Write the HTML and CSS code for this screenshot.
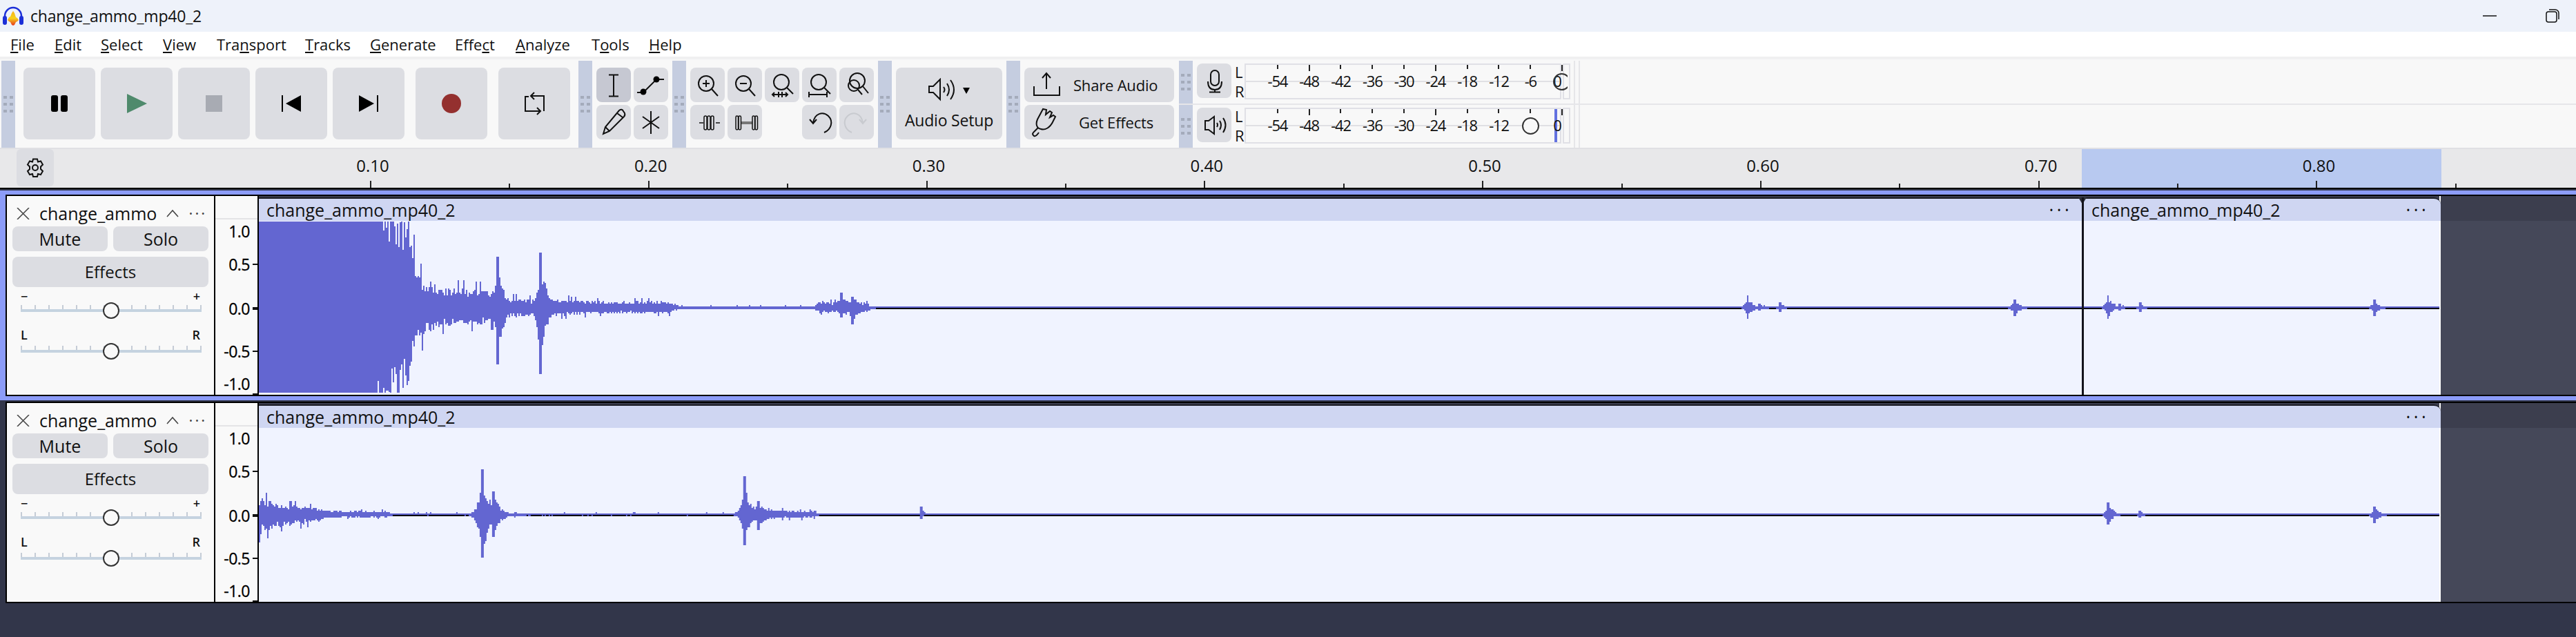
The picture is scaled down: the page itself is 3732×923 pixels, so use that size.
FILE: index.html
```html
<!DOCTYPE html>
<html lang="en">
<head>
<meta charset="utf-8">
<title>change_ammo_mp40_2</title>
<link rel="stylesheet" href="styles.css">
</head>
<body>
<header class="titlebar">
  <svg class="logo" viewBox="0 0 32 28" width="32" height="28"><defs><linearGradient id="lg" x1="0" y1="0" x2="0" y2="1"><stop offset="0" stop-color="#f7b21a"/><stop offset=".5" stop-color="#f6d21c"/><stop offset="1" stop-color="#e8331c"/></linearGradient></defs><path d="M4 20V14a12 12 0 0 1 24 0v6" fill="none" stroke="#1c2fd8" stroke-width="2.5"/><rect x="1" y="14" width="6" height="13" rx="3" fill="#1c2fd8"/><rect x="25" y="14" width="6" height="13" rx="3" fill="#1c2fd8"/><path d="M8 20l2-4 2-1 2-5 2-3 2 3 2 6 2 1 2 3-2 2-2 1-2 4-2 1-2-1-2-4-2-1z" fill="url(#lg)"/></svg>
  <span class="title-text">change_ammo_mp40_2</span>
  <span class="win-spacer"></span>
  <svg class="win-icon" viewBox="0 0 20 20" width="20" height="20"><path d="M0 10h20" stroke="#111" stroke-width="1.5"/></svg>
  <svg class="win-icon" viewBox="0 0 20 20" width="20" height="20"><rect x="1" y="4" width="15" height="15" rx="3" fill="none" stroke="#111" stroke-width="1.5"/><path d="M5 1h9a5 5 0 0 1 5 5v9" fill="none" stroke="#111" stroke-width="1.5"/></svg>
</header>

<nav class="menubar">
  <span class="m-file"><u>F</u>ile</span><span class="m-edit"><u>E</u>dit</span><span class="m-sel"><u>S</u>elect</span><span class="m-view"><u>V</u>iew</span><span class="m-trans">Tra<u>n</u>sport</span><span class="m-tracks"><u>T</u>racks</span><span class="m-gen"><u>G</u>enerate</span><span class="m-eff">Effe<u>c</u>t</span><span class="m-ana"><u>A</u>nalyze</span><span class="m-tools">T<u>o</u>ols</span><span class="m-help"><u>H</u>elp</span>
</nav>

<section class="toolbar">
  <div class="grip"></div>
  <div class="transport">
    <button class="btn big"><svg viewBox="0 0 104 104"><rect x="40" y="40" width="10" height="24" rx="3"/><rect x="54" y="40" width="10" height="24" rx="3"/></svg></button>
    <button class="btn big"><svg viewBox="0 0 104 104"><path class="play" d="M38 38l29 14-29 14z"/></svg></button>
    <button class="btn big"><svg viewBox="0 0 104 104"><rect class="stop" x="40" y="40" width="24" height="24"/></svg></button>
    <button class="btn big"><svg viewBox="0 0 104 104"><path d="M66 40v24L44 52z"/><rect x="38" y="40" width="2" height="24"/></svg></button>
    <button class="btn big"><svg viewBox="0 0 104 104"><path d="M38 40v24l22-12z"/><rect x="64" y="40" width="2" height="24"/></svg></button>
    <button class="btn big rec"><svg viewBox="0 0 104 104"><circle class="record" cx="52" cy="52" r="14"/></svg></button>
    <button class="btn big"><svg viewBox="0 0 104 104"><path class="ln" d="M47 41h19v22M39 46v17h22M39 46v-4h5M52 36l-5 5 5 5M56 58l5 5-5 5"/></svg></button>
  </div>
  <div class="grip"></div>
  <div class="tools">
    <button class="btn sm active"><svg viewBox="0 0 50 50"><path class="ln" d="M25 11v30M18 10.500h14M18 41.500h14"/></svg></button>
    <button class="btn sm"><svg viewBox="0 0 50 50"><path class="ln" d="M5 36h9l19-19h11"/><circle cx="14" cy="35" r="4.500"/><circle cx="33" cy="17" r="4.500"/></svg></button>
    <button class="btn sm"><svg viewBox="0 0 50 50"><path class="ln" d="M10 42l3-10 20-24q4-3 6 1l2 3q1 3-1 5L19 38zM13 32l6 6M30 12l8 6"/></svg></button>
    <button class="btn sm"><svg viewBox="0 0 50 50"><path class="ln" d="M25 9v33M13 17l24 17M13 34l24-17"/></svg></button>
  </div>
  <div class="grip"></div>
  <div class="zooms">
    <button class="btn sm"><svg viewBox="0 0 50 50"><circle class="ln" cx="23" cy="23" r="11"/><path class="ln" d="M31 31l9 10M23 18v10M18 23h10"/></svg></button>
    <button class="btn sm"><svg viewBox="0 0 50 50"><circle class="ln" cx="23" cy="23" r="11"/><path class="ln" d="M31 31l9 10M18 23h10"/></svg></button>
    <button class="btn sm"><svg viewBox="0 0 50 50"><circle class="ln" cx="24" cy="21" r="11"/><path class="ln" d="M32 29l9 9M11 39h22M20 35v8M25 35v8M14 36l-3 3 3 3M30 36l3 3-3 3"/></svg></button>
    <button class="btn sm"><svg viewBox="0 0 50 50"><circle class="ln" cx="24" cy="21" r="11"/><path class="ln" d="M32 29l9 9M11 39h24M10 35v8M36 35v8"/></svg></button>
    <button class="btn sm"><svg viewBox="0 0 50 50"><circle class="ln" cx="26" cy="19" r="11"/><circle class="ln" cx="21" cy="26" r="8"/><path class="ln" d="M34 27l8 10M27 32l6 7"/></svg></button>
    <button class="btn sm"><svg viewBox="0 0 50 50"><path class="ln thin" d="M13 26h6M37 26h6"/><rect class="ln thin" x="20" y="16" width="4" height="20" rx="2"/><rect class="ln thin" x="25" y="16" width="4" height="20" rx="2"/><rect class="ln thin" x="30" y="16" width="4" height="20" rx="2"/></svg></button>
    <button class="btn sm"><svg viewBox="0 0 50 50"><path class="ln gray-bar" d="M20 26h16"/><rect class="ln thin" x="12" y="16" width="3.500" height="20" rx="1.700"/><rect class="ln thin" x="16" y="16" width="3.500" height="20" rx="1.700"/><rect class="ln thin" x="36" y="16" width="3.500" height="20" rx="1.700"/><rect class="ln thin" x="40" y="16" width="3.500" height="20" rx="1.700"/></svg></button>
    <span class="blank"></span>
    <button class="btn sm"><svg viewBox="0 0 50 50"><path class="ln" d="M32 40c10-4 14-16 6-24-8-7-20-4-22 10M11 21l5 6 5-6"/></svg></button>
    <button class="btn sm"><svg viewBox="0 0 50 50"><path class="ln faint" d="M18 40C8 36 4 24 12 16c8-7 20-4 22 10M39 21l-5 6-5-6"/></svg></button>
  </div>
  <div class="grip"></div>
  <div class="setup-wrap">
    <button class="btn setup">
      <svg class="setup-icon" viewBox="0 0 80 34" width="80" height="34"><path class="ln" d="M10 12h6L26 2v29L16 21h-6z"/><path class="ln" d="M31 13q3 4 0 8M36 8q6 9 0 18M41 3q10 14 0 28"/><path d="M59 14h10l-5 9z"/></svg>
      <span>Audio Setup</span>
    </button>
  </div>
  <div class="grip"></div>
  <div class="share">
    <button class="btn wide"><svg viewBox="0 0 62 50" width="62" height="50"><path class="ln" d="M14 27v13h37V27M32 31V9M26 15l6-7 6 7"/></svg><span class="wide-l1">Share Audio</span></button>
    <button class="btn wide"><svg viewBox="0 0 62 50" width="62" height="50"><path class="ln" d="M27 6l-8 15c-3 7-1 13 5 14 6 2 13-2 17-10l4-8-3-2-5 3 3-7-3-2-6 5 1-7zM20 33l-4 4c-3 3-6 5-2 8 3 1 5-2 7-5"/></svg><span class="wide-l2">Get Effects</span></button>
  </div>
  <div class="meters">
    <div class="meter-row">
      <div class="grip small"></div>
      <button class="btn sm meter-btn"><svg viewBox="0 0 50 50"><rect class="ln" x="20" y="10" width="12" height="22" rx="6"/><path class="ln" d="M16 26q0 12 10 12t10-12M26 38v3M18 41.500h16"/></svg></button>
      <div class="lr"><span>L</span><span>R</span></div>
      <div class="meter">
        <div class="cell"><i></i><b>-54</b></div><div class="cell"><i></i><b>-48</b></div><div class="cell"><i></i><b>-42</b></div><div class="cell"><i></i><b>-36</b></div><div class="cell"><i></i><b>-30</b></div><div class="cell"><i></i><b>-24</b></div><div class="cell"><i></i><b>-18</b></div><div class="cell"><i></i><b>-12</b></div><div class="cell"><i></i><b>-6</b></div><div class="cell"><i></i><b>0</b></div>
        <span class="thumb thumb-rec"></span>
      </div>
      <div class="meter-end"></div>
      <div class="meter-sep"></div>
    </div>
    <div class="meter-row">
      <div class="grip small"></div>
      <button class="btn sm meter-btn"><svg viewBox="0 0 50 50"><path class="ln" d="M12 19h5l8-6v25l-8-6h-5z"/><path class="ln" d="M29 22q2 3 0 6M33 19q4 6 0 13M38 15q7 10 0 21"/></svg></button>
      <div class="lr"><span>L</span><span>R</span></div>
      <div class="meter">
        <span class="level"></span>
        <div class="cell"><i></i><b>-54</b></div><div class="cell"><i></i><b>-48</b></div><div class="cell"><i></i><b>-42</b></div><div class="cell"><i></i><b>-36</b></div><div class="cell"><i></i><b>-30</b></div><div class="cell"><i></i><b>-24</b></div><div class="cell"><i></i><b>-18</b></div><div class="cell"><i></i><b>-12</b></div><div class="cell"><i></i><b>-6</b></div><div class="cell"><i></i><b>0</b></div>
        <span class="thumb thumb-play"></span>
      </div>
      <div class="meter-end"></div>
      <div class="meter-sep"></div>
    </div>
  </div>
</section>

<section class="ruler">
  <button class="gear"><svg viewBox="0 0 28 28" width="28" height="28"><path class="ln" d="M11 1.500h6l1 4 4-1 3 5-3 3v3.500l3 3-3 5-4-1-1 4h-6l-1-4-4 1-3-5 3-3V12.500l-3-3 3-5 4 1z"/><circle class="ln" cx="14" cy="14" r="4"/></svg></button>
  <div class="cells">
    <div class="rc major"><b>0.10</b><i></i></div><div class="rc"><b></b><i></i></div>
    <div class="rc major"><b>0.20</b><i></i></div><div class="rc"><b></b><i></i></div>
    <div class="rc major"><b>0.30</b><i></i></div><div class="rc"><b></b><i></i></div>
    <div class="rc major"><b>0.40</b><i></i></div><div class="rc"><b></b><i></i></div>
    <div class="rc major"><b>0.50</b><i></i></div><div class="rc"><b></b><i></i></div>
    <div class="rc major"><b>0.60</b><i></i></div><div class="rc"><b></b><i></i></div>
    <div class="rc major"><b>0.70</b><i></i></div><div class="rc"><b></b><i></i></div>
    <div class="rc major"><b>0.80</b><i></i></div><div class="rc"><b></b><i></i></div>
  </div>
</section>

<main class="tracks">
  <article class="track selected">
    <div class="track-inner">
      <aside class="panel">
        <div class="panel-title"><svg class="x" viewBox="0 0 19 17" width="19" height="17"><path class="ln gr" d="M1 0l17 17M18 0L1 17"/></svg><span class="name">change_ammo</span><svg class="caret" viewBox="0 0 20 12" width="20" height="12"><path class="ln gr" d="M2 11l8-9 8 9"/></svg><span class="more">•••</span></div>
        <div class="ms"><button class="btn pbtn">Mute</button><button class="btn pbtn">Solo</button></div>
        <button class="btn effects">Effects</button>
        <div class="slabels gain"><span>−</span><span>+</span></div>
        <div class="slider"><span class="sthumb"></span></div>
        <div class="slabels pan"><span>L</span><span>R</span></div>
        <div class="slider"><span class="sthumb"></span></div>
      </aside>
      <div class="vruler">
        <div class="vr-head"></div>
        <div class="vr-scale">
          <div class="vr-row"><b>1.0</b></div>
          <div class="vr-row tk"><b>0.5</b></div>
          <div class="vr-row tk thick"><b>0.0</b></div>
          <div class="vr-row tk"><b>-0.5</b></div>
          <div class="vr-row"><b>-1.0</b></div>
        </div>
      </div>
      <div class="lane">
        <div class="clip clip-a">
          <div class="clip-title"><span>change_ammo_mp40_2</span><span class="cdots">•••</span></div>
          <canvas class="wave" data-wave="a" data-x="375" width="2641" height="252"></canvas>
        </div>
        <div class="clip clip-b">
          <div class="clip-title"><span>change_ammo_mp40_2</span><span class="cdots">•••</span></div>
          <canvas class="wave" data-wave="b" data-x="3019" width="516" height="252"></canvas>
        </div>
      </div>
    </div>
  </article>
  <article class="track">
    <div class="track-inner">
      <aside class="panel">
        <div class="panel-title"><svg class="x" viewBox="0 0 19 17" width="19" height="17"><path class="ln gr" d="M1 0l17 17M18 0L1 17"/></svg><span class="name">change_ammo</span><svg class="caret" viewBox="0 0 20 12" width="20" height="12"><path class="ln gr" d="M2 11l8-9 8 9"/></svg><span class="more">•••</span></div>
        <div class="ms"><button class="btn pbtn">Mute</button><button class="btn pbtn">Solo</button></div>
        <button class="btn effects">Effects</button>
        <div class="slabels gain"><span>−</span><span>+</span></div>
        <div class="slider"><span class="sthumb"></span></div>
        <div class="slabels pan"><span>L</span><span>R</span></div>
        <div class="slider"><span class="sthumb"></span></div>
      </aside>
      <div class="vruler">
        <div class="vr-head"></div>
        <div class="vr-scale">
          <div class="vr-row"><b>1.0</b></div>
          <div class="vr-row tk"><b>0.5</b></div>
          <div class="vr-row tk thick"><b>0.0</b></div>
          <div class="vr-row tk"><b>-0.5</b></div>
          <div class="vr-row"><b>-1.0</b></div>
        </div>
      </div>
      <div class="lane">
        <div class="clip clip-full">
          <div class="clip-title"><span>change_ammo_mp40_2</span><span class="cdots">•••</span></div>
          <canvas class="wave" data-wave="c" data-x="375" width="3160" height="252"></canvas>
        </div>
      </div>
    </div>
  </article>
</main>
<script src="wave.js"></script>
</body>
</html>
```

FILE: styles.css
```css
* { box-sizing: border-box; }
html, body { margin: 0; padding: 0; height: 923px; overflow: hidden; }
body { background: #32364a; font-family: "Open Sans", "Noto Sans", sans-serif; font-size: 24px; color: #111; }
button { font: inherit; color: inherit; border: 0; padding: 0; margin: 0; }
svg { display: block; }
.ln { fill: none; stroke: #111; stroke-width: 2; }
.ln.thin { stroke-width: 1.500; }
.ln.gr { stroke: #444; stroke-width: 1.500; }
.ln.faint { stroke: #c8cacf; }
.ln.gray-bar { stroke: #777; stroke-width: 4; }

.titlebar { height: 46px; background: #eef2fa; display: flex; align-items: center; padding: 0 24px 0 3px; }
.logo { margin-right: 9px; }
.title-text { font-size: 23px; letter-spacing: -.2px; }
.win-spacer { flex: 1; }
.win-icon { margin-left: 71px; }

.menubar { height: 36px; background: #fff; display: flex; align-items: center; font-size: 22px; line-height: 36px; padding-left: 15px; }
.menubar span { flex: none; }
.m-file { width: 64px; } .m-edit { width: 67px; } .m-sel { width: 90px; } .m-view { width: 78px; }
.m-trans { width: 128px; } .m-tracks { width: 94px; } .m-gen { width: 123px; } .m-eff { width: 88px; }
.m-ana { width: 110px; } .m-tools { width: 83px; }

.toolbar { height: 134px; background: #f8f8f8; border-top: 4px solid #f0f0f1; border-bottom: 2px solid #e0e0e4; padding: 2px 0 0 2px; display: flex; align-items: flex-start; }
.grip { flex: none; width: 20px; height: 126px; background: #c5cde0; display: flex; align-items: center; justify-content: center; }
.grip::before { content: ""; width: 5px; height: 4px; margin: -20px 9px 0 0; background: #a4abbb; box-shadow: 9px 0 #a4abbb, 0 10px #a4abbb, 9px 10px #a4abbb, 0 20px #a4abbb, 9px 20px #a4abbb; }
.grip.small { height: 62px; }
.btn { display: block; background: #dcdde2; border-radius: 8px; flex: none; }
.btn.active { background: #c6c8d2; }
.big { width: 104px; height: 104px; }
.big svg, .sm svg { width: 100%; height: 100%; }
.play { fill: #4f8a6c; }
.stop { fill: #a8abb3; }
.record { fill: #94302f; }
.transport { display: flex; gap: 8px; padding: 10px 12px 0; }
.rec { margin: 0 8px; }
.sm { width: 50px; height: 50px; }
.tools { display: grid; grid-template-columns: 50px 50px; gap: 4px; padding: 10px 6px 0; }
.zooms { display: grid; grid-template-columns: repeat(5, 50px); gap: 4px; padding: 10px 6px 0; }
.setup-wrap { padding: 10px 6px 0; }
.setup { width: 154px; height: 104px; display: flex; flex-direction: column; align-items: center; }
.setup-icon { margin: 15px 0 0 2px; }
.setup span { font-size: 23px; line-height: 28px; margin-top: 13px; letter-spacing: -.2px; white-space: nowrap; }
.share { display: flex; flex-direction: column; gap: 4px; padding: 10px 7px 0 6px; }
.wide { width: 217px; height: 50px; display: flex; align-items: center; }
.wide span { font-size: 22px; letter-spacing: -.2px; white-space: nowrap; }
.wide-l1 { margin-left: 9px; }
.wide-l2 { margin-left: 17px; }

.meters { flex: 1; display: flex; flex-direction: column; gap: 2px; background: #e6e6e9; height: 126px; }
.meter-row { height: 62px; display: flex; background: #f8f8f8; align-items: flex-start; }
.meter-btn { margin: 4px 0 0 6px; }
.lr { width: 19px; margin-top: 2px; display: flex; flex-direction: column; font-size: 22px; line-height: 28px; padding-left: 5px; }
.meter { position: relative; width: 459px; height: 52px; margin-top: 4px; border: 2px solid #e0e0e6; background: linear-gradient(#e0e0e4, #e0e0e4) 0 23px / 100% 2px no-repeat #f8f8f8; padding-left: 23px; display: flex; }
.cell { width: 45.8px; flex: none; display: flex; flex-direction: column; align-items: center; position: relative; }
.cell i { width: 2px; height: 6px; background: #222; }
.cell:nth-of-type(2) i, .cell:nth-of-type(6) i, .cell:nth-of-type(10) i { height: 9px; }
.cell b { font-weight: 400; font-size: 22px; letter-spacing: -1.200px; line-height: 26px; position: absolute; top: 10px; }
.cell:last-of-type b { margin-left: -14px; }
.thumb { position: absolute; width: 25px; height: 25px; border: 2px solid #333; border-radius: 50%; background: #f8f8f8; }
.thumb-rec { left: 445px; top: 12px; background: transparent; clip-path: inset(0 4px 0 0); }
.thumb-play { left: 400px; top: 12px; }
.level { position: absolute; left: 447px; top: 0; width: 4px; height: 48px; background: #6372e0; }
.meter-end { width: 11px; height: 52px; margin: 4px 0 0 2px; border: 2px solid #e0e0e6; }
.meter-sep { width: 9px; height: 62px; margin-left: 5px; border-left: 2px solid #e6e6e9; border-right: 2px solid #e6e6e9; }

.ruler { position: relative; height: 58px; background: #e8e8ea; border-bottom: 2px solid #000; display: flex; overflow: hidden; }
.ruler::before { content: ""; position: absolute; left: 3016px; top: 0; width: 521px; height: 56px; background: #b8c9f0; }
.gear { position: relative; width: 54px; height: 54px; margin-left: 24px; background: #dcdde2; border-radius: 6px; display: flex; align-items: center; justify-content: center; }
.cells { position: relative; display: flex; margin-left: 358.300px; }
.rc { width: 201.400px; flex: none; height: 56px; display: flex; flex-direction: column; align-items: center; justify-content: flex-end; }
.rc b { font-weight: 400; font-size: 24px; line-height: 30px; padding-left: 6px; position: absolute; top: 9px; }
.rc i { width: 2px; height: 6px; background: #222; }
.rc.major i { height: 10px; }

.tracks { padding-top: 2px; }
.track { padding: 0 0 0 8px; border-top: 6px solid transparent; border-bottom: 6px solid transparent; margin-bottom: 2px; }
.track + .track { border-top: 0; margin-top: 0; border-bottom: 0; }
.track.selected { background: #8c9cf8; background-clip: padding-box; border-top-width: 6px; padding-top: 0; border-color: #8c9cf8; }
.track-inner { display: flex; height: 292px; border-top: 2px solid #000; border-bottom: 2px solid #000; border-left: 2px solid #000; background: #454859; }
.panel { width: 300px; flex: none; background: #f9f9f9; padding: 0 8px; display: flex; flex-direction: column; }
.panel-title { height: 44px; display: flex; align-items: center; padding: 6px 0 0 6px; }
.x { margin-right: 14px; }
.name { width: 183px; font-size: 25px; white-space: nowrap; letter-spacing: 0; }
.caret { margin-right: 14px; }
.more { font-size: 13px; letter-spacing: 4px; color: #444; white-space: nowrap; }
.ms { display: flex; gap: 8px; }
.pbtn { width: 138px; height: 36px; line-height: 36px; text-align: center; font-size: 25px; }
.effects { width: 284px; height: 44px; margin-top: 8px; line-height: 44px; text-align: center; font-size: 24px; }
.slabels { display: flex; justify-content: space-between; padding: 0 12px; font-size: 18px; line-height: 22px; height: 22px; color: #111; font-weight: 600; }
.gain { margin-top: 2px; }
.pan { margin-top: 22px; }
.slider { position: relative; height: 16px; margin: 0 2px 0 12px; width: 262px; border-bottom: 4px solid #c5d3e0; background: repeating-linear-gradient(90deg, #c5ccd6 0 2px, transparent 2px 20px) 0 6px / 100% 6px no-repeat; }
.gain + .slider { margin-top: -4px; }
.pan + .slider { margin-top: -1px; }
.sthumb { position: absolute; left: 119px; top: 2px; width: 24px; height: 24px; background: #f9f9f9; border: 2px solid #333; border-radius: 50%; }
.vruler { width: 65px; flex: none; border-left: 2px solid #000; border-right: 2px solid #000; background: #f9f9f9; display: flex; flex-direction: column; }
.vr-head { height: 34px; border-bottom: 2px solid #e4e4e6; flex: none; }
.vr-scale { display: grid; grid-template-rows: 48px 64px 62px 47px 33px; background: linear-gradient(#111, #111) right 0 bottom 0 / 7px 2px no-repeat; }
.vr-row { display: flex; justify-content: flex-end; align-items: center; padding-right: 11px; height: 34px; position: relative; }
.vr-row b { font-weight: 400; font-size: 23px; line-height: 30px; letter-spacing: -.5px; color: #000; -webkit-text-stroke: .3px #000; }
.tk::after { content: ""; position: absolute; right: 0; top: 16px; width: 7px; height: 2px; background: #111; }
.thick::after { height: 4px; top: 15px; }
.lane { flex: 1; display: flex; background: linear-gradient(#3c3e4e 0 36px, transparent 36px); position: relative; }
.clip { display: flex; flex-direction: column; padding-top: 2px; flex: none; position: relative; }
.clip-a { width: 2641px; }
.clip-b { width: 517px; margin-left: 3px; }
.clip-full { width: 3161px; }
.clip-b, .clip-full { border-right: 2px solid #fff; }
.clip-title { height: 34px; border-top: 2px solid #1c1d26; background: #cfd6f2; display: flex; justify-content: space-between; align-items: center; padding: 0 13px 0 11px; font-size: 25px; letter-spacing: 0; white-space: nowrap; }
.clip-b .clip-title, .clip-full .clip-title { border-top-right-radius: 10px; margin-right: -2px; padding-right: 16px; }
.clip-b::before { content: ""; position: absolute; left: -8px; top: 2px; border-left: 6.500px solid transparent; border-right: 6.500px solid transparent; border-top: 10px solid #2c2d38; }
.clip-b::after { content: ""; position: absolute; left: -3px; top: 2px; bottom: 0; width: 3px; background: #14141c; }
.cdots { font-size: 14px; letter-spacing: 6px; }
.wave { display: block; background: #f0f3ff; width: 100%; height: 252px; }
```

FILE: wave.js
```javascript
(function () {
  var COLOR = '#6366d1';
  var BASE = {
    a: [[375,300,300],[505,300,300],[552,210,190],[592,118,118],[604,50,50],[640,32,28],[717,26,24],[735,15,15],[777,13,13],[815,14,12],[840,11,10],[890,10,9],[968,10,9],[983,3,2],[1178,3,2],[1185,10,8],[1255,8,6],[1262,2,0],[4000,2,0]],
    c: [[375,28,30],[400,17,19],[463,11,11],[470,7,5],[557,6,4],[570,3,1],[1050,3,1],[1060,2,0],[1105,8,6],[1177,6,5],[1190,2,0],[4000,2,0]]
  };
  BASE.b = [[0,2,0],[4000,2,0]];
  var BURSTS = {
    a: [[720,9,74,82],[782,9,80,96],[1218,14,22,14],[1234,12,16,24],[2531,8,18,15],[2548,16,5,3],[2578,8,7,5],[2918,8,12,12]],
    b: [[3053,8,18,15],[3070,16,5,3],[3100,8,7,5],[3440,8,12,12]],
    c: [[698,11,66,62],[714,10,34,32],[745,26,4,3],[1078,9,56,44],[1098,12,20,22],[1334,4,12,5],[3054,8,18,14],[3100,8,6,4],[3440,8,12,12]]
  };
  function interp(t, x, i) {
    for (var k = 1; k < t.length; k++) {
      if (x <= t[k][0]) {
        var p = (x - t[k - 1][0]) / (t[k][0] - t[k - 1][0]);
        return t[k - 1][i] + (t[k][i] - t[k - 1][i]) * p;
      }
    }
    return t[t.length - 1][i];
  }
  function burst(list, x, i, rnd) {
    var best = 0;
    for (var k = 0; k < list.length; k++) {
      var b = list[k], d = x - b[0];
      var v = b[i] * Math.exp(-Math.abs(d) / (d < 0 ? b[1] * .5 : b[1]));
      if (Math.abs(d) < 2) v = b[i];
      else v *= rnd;
      if (v > best) best = v;
    }
    return best;
  }
  document.querySelectorAll('canvas.wave').forEach(function (c) {
    var key = c.dataset.wave, x0 = +c.dataset.x, ctx = c.getContext('2d');
    var seed = key === 'c' ? 91 : 17;
    function rnd() { seed = (seed * 16807) % 2147483647; return seed / 2147483647; }
    ctx.fillStyle = '#000';
    ctx.fillRect(0, 126, c.width, 2);
    ctx.fillStyle = COLOR;
    for (var px = 0; px < c.width; px += 2) {
      var x = x0 + px;
      var r1 = rnd(), r2 = rnd(), r3 = rnd(), r4 = rnd();
      var fu = .5 + .5 * r1, fd = .5 + .5 * r2;
      if (r1 > .93) fu = 1.35;
      if (r2 > .93) fd = 1.35;
      var u = interp(BASE[key], x, 1), d = interp(BASE[key], x, 2);
      u = Math.max(u * fu, burst(BURSTS[key], x, 2, .55 + .45 * r3));
      d = Math.max(d * fd, burst(BURSTS[key], x, 3, .55 + .45 * r4));
      u = Math.min(125, Math.max(2, Math.round(u / 2) * 2));
      d = Math.min(123, Math.max(0, Math.round(d / 2) * 2));
      ctx.fillRect(px, 126 - u, 2, u + d);
    }
  });
})();
```
